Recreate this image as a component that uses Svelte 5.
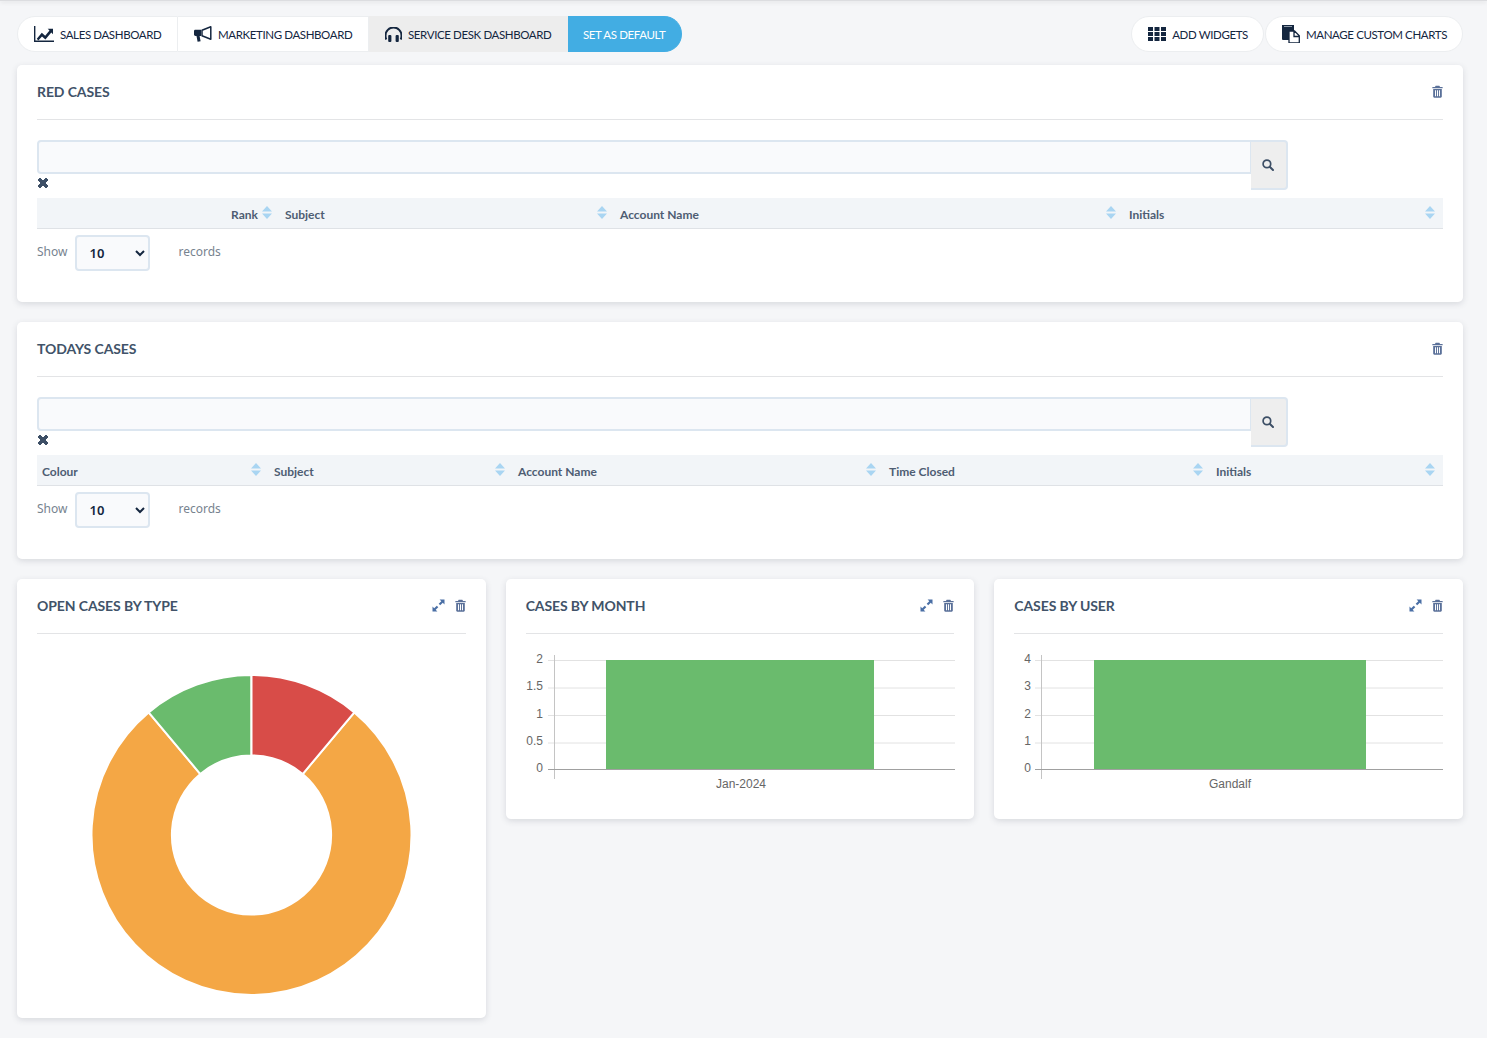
<script>
  const tables = [
    { title: 'RED CASES', cols: [
      { label: 'Rank', width: 243, right: true },
      { label: 'Subject', width: 335 },
      { label: 'Account Name', width: 509 },
      { label: 'Initials', width: 319 }
    ]},
    { title: 'TODAYS CASES', cols: [
      { label: 'Colour', width: 232 },
      { label: 'Subject', width: 244 },
      { label: 'Account Name', width: 371 },
      { label: 'Time Closed', width: 327 },
      { label: 'Initials', width: 232 }
    ]}
  ];
  const gridY = [15, 42.5, 70, 97.5];
  const charts = [
    { title: 'CASES BY MONTH', ticks: ['2', '1.5', '1', '0.5', '0'], label: 'Jan-2024', axis: 28, barX: 80, barW: 268, labelX: 215, tickX: 17 },
    { title: 'CASES BY USER', ticks: ['4', '3', '2', '1', '0'], label: 'Gandalf', axis: 27, barX: 80, barW: 272, labelX: 216, tickX: 17 }
  ];
  const tickY = [14, 41, 69, 96, 123];
</script>

{#snippet trash()}
  <svg class="trash" viewBox="0 0 12 14" width="11" height="13">
    <path fill-rule="evenodd" d="M4 0.6h4l.8 1.5H11.6v1.3H.4V2.1h2.800zM1.300 4.200h9.400v8.300c0 .8-.5 1.300-1.200 1.300H2.500c-.7 0-1.200-.5-1.200-1.300zM3.300 5.600v6.600h1.100V5.600zM5.450 5.600v6.600h1.100V5.600zM7.600 5.600v6.600h1.100V5.600z"/>
  </svg>
{/snippet}

{#snippet expand()}
  <svg class="expand" viewBox="0 0 13 13" width="13" height="13">
    <path d="M7.600 0.500H12.500V5.400L10.800 3.700 8.200 6.300 6.700 4.800 9.300 2.200zM.5 7.600 2.200 9.300 4.800 6.700 6.300 8.200 3.700 10.800 5.400 12.500H.5z"/>
  </svg>
{/snippet}

{#snippet sort()}
  <svg class="sort" viewBox="0 0 10 13" width="10" height="13">
    <path fill="#a9d5f2" d="M5 0 10 5.400H0zM0 7.400H10L5 13z"/>
  </svg>
{/snippet}

<div class="topline"></div>
<main class="page">
  <div class="toolbar">
    <nav class="tabs">
      <button class="tab first">
        <svg viewBox="0 0 20 16" width="20" height="16"><path d="M.7 0v15.200H20" fill="none" stroke="#14263f" stroke-width="1.400"/><path d="M2.800 12.800 7.800 6.800l3.400 3 4.300-5.300-1.800-1.700H19v5.400l-1.700-1.700-5.900 7-3.400-3.100-3.700 4.200z" fill="#14263f"/></svg>
        Sales Dashboard
      </button>
      <button class="tab">
        <svg viewBox="0 0 18 16" width="18" height="16"><path d="M0 5.200C0 4.300.7 3.800 1.500 3.800H7V10H5.600l1 5.200-3 .6L2.500 10H1.500C.7 10 0 9.500 0 8.600z" fill="#14263f"/><path d="M8 4.200 16.800.8v12.400L8 9.800z" fill="#fff" stroke="#14263f" stroke-width="1.500" stroke-linejoin="round"/></svg>
        Marketing Dashboard
      </button>
      <button class="tab active">
        <svg viewBox="0 0 17 15" width="17" height="15"><path d="M1.300 12.500A8 8 0 0 1 .5 8.500 8 8 0 0 1 16.500 8.500 8 8 0 0 1 15.700 12.500" fill="none" stroke="#14263f" stroke-width="2"/><rect x="3.200" y="8" width="3.200" height="7" rx="1" fill="#14263f"/><rect x="10.600" y="8" width="3.200" height="7" rx="1" fill="#14263f"/></svg>
        Service Desk Dashboard
      </button>
      <button class="tab default">Set as default</button>
    </nav>
    <div class="actions">
      <button class="pill">
        <svg viewBox="0 0 18 14" width="18" height="14"><path d="M0 0h5v4H0zM6.500 0h5v4h-5zM13 0h5v4h-5zM0 5h5v4H0zM6.500 5h5v4h-5zM13 5h5v4h-5zM0 10h5v4H0zM6.500 10h5v4h-5zM13 10h5v4h-5z" fill="#14263f"/></svg>
        Add widgets
      </button>
      <button class="pill">
        <svg viewBox="0 0 18 18" width="18" height="18"><path d="M0 0h12v15H1a1 1 0 0 1-1-1z" fill="#14263f"/><path d="M2 1.500h8" stroke="#8e9aa8"/><path d="M7 6h5.500l4.800 4.800V18H7zM12 6v5.500h5" fill="#fff" stroke="#14263f" stroke-width="1.300"/></svg>
        Manage custom charts
      </button>
    </div>
  </div>

  {#each tables as t}
    <section class="card wide">
      <header class="head">
        <h2>{t.title}</h2>
        <span class="tools">{@render trash()}</span>
      </header>
      <div class="searchrow">
        <input class="search" type="text" aria-label="Search" />
        <button class="go" aria-label="Search">
          <svg viewBox="0 0 12 12" width="12" height="12"><circle cx="4.900" cy="4.900" r="3.800" fill="none" stroke="#3d4f66" stroke-width="1.700"/><path d="M7.700 7.700 11 11" stroke="#3d4f66" stroke-width="2" stroke-linecap="round"/></svg>
        </button>
      </div>
      <svg class="clear" viewBox="0 0 12 12" width="12" height="12"><path d="M1 3 3 1l3 3 3-3 2 2-3 3 3 3-2 2-3-3-3 3-2-2 3-3z" fill="#3d4f66" stroke="#3d4f66" stroke-linejoin="round"/></svg>
      <table>
        <colgroup>
          {#each t.cols as c}<col style="width:{c.width}px" />{/each}
        </colgroup>
        <thead>
          <tr>
            {#each t.cols as c}
              <th class:right={c.right}>{c.label}{@render sort()}</th>
            {/each}
          </tr>
        </thead>
      </table>
      <div class="length">
        <span>Show</span>
        <select aria-label="Records"><option>10</option><option>25</option><option>50</option></select>
        <span class="records">records</span>
      </div>
    </section>
  {/each}

  <div class="row">
    <section class="card">
      <header class="head">
        <h2>OPEN CASES BY TYPE</h2>
        <span class="tools">{@render expand()}{@render trash()}</span>
      </header>
      <svg class="donut" viewBox="0 0 429 384" width="429" height="384">
        <g transform="translate(214.500 201)" stroke="#fff" stroke-width="2">
          <path fill="#f4a745" d="M102.850 -122.570A160 160 0 1 1 -102.850 -122.570L-51.170 -60.980A79.600 79.600 0 1 0 51.170 -60.980Z"/>
          <path fill="#6abb6d" d="M-102.850 -122.570A160 160 0 0 1 0 -160V-79.600A79.600 79.600 0 0 0 -51.170 -60.980Z"/>
          <path fill="#d84c48" d="M0 -160A160 160 0 0 1 102.850 -122.570L51.170 -60.980A79.600 79.600 0 0 0 0 -79.600Z"/>
        </g>
      </svg>
    </section>

    {#each charts as c}
      <section class="card">
        <header class="head">
          <h2>{c.title}</h2>
          <span class="tools">{@render expand()}{@render trash()}</span>
        </header>
        <svg class="chart" viewBox="0 0 429 165" width="429" height="165">
          {#each gridY as y}
            <line x1={c.axis - 6} x2="429" y1={y + 11.500} y2={y + 11.500} stroke="#e2e2e2"/>
          {/each}
          <rect x={c.barX} y="26" width={c.barW} height="110" fill="#6abb6d"/>
          <line x1={c.axis + 0.5} x2={c.axis + 0.5} y1="21" y2="145" stroke="#c4c4c4"/>
          <line x1={c.axis - 6} x2="429" y1="135.500" y2="135.500" stroke="#a0a0a0"/>
          {#each c.ticks as t, i}
            <text x={c.tickX} y={tickY[i] + 15} text-anchor="end">{t}</text>
          {/each}
          <text x={c.labelX} y="154" text-anchor="middle">{c.label}</text>
        </svg>
      </section>
    {/each}
  </div>
</main>

<style>
  :global(body) {
    margin: 0;
    background: #f5f6f8;
    font-family: "Lato", "Liberation Sans", sans-serif;
    color: #3d4f66;
  }
  .topline {
    height: 1px;
    background: #dcdde0;
    box-shadow: 0 1px 4px rgba(0, 0, 0, .2);
  }
  .page {
    padding: 15px 24px 20px 17px;
  }
  .toolbar {
    display: flex;
    justify-content: space-between;
    height: 36px;
    margin-bottom: 13px;
  }
  .tabs, .actions {
    display: flex;
  }
  .tab, .pill {
    display: flex;
    align-items: center;
    gap: 6px;
    height: 36px;
    padding: 0 15px;
    border: 0;
    font: 11.500px "Lato", sans-serif;
    letter-spacing: -.38px;
    text-transform: uppercase;
    color: #14263f;
    background: #fff;
    white-space: nowrap;
    box-sizing: border-box;
  }
  .tab svg, .pill svg { flex-shrink: 0; }
  .tab {
    border-top: 1px solid #eceef0;
    border-bottom: 1px solid #eceef0;
    border-right: 1px solid #eceef0;
  }
  .tab.first {
    padding-left: 16px;
    border-left: 1px solid #eceef0;
    border-radius: 18px 0 0 18px;
    width: 161px;
  }
  .tab:nth-child(2) { width: 191px; padding-left: 16px; }
  .tab.active { width: 199px; background: #ededed; border-color: #ededed; padding-left: 16px; }
  .tab.default {
    width: 114px;
    background: #42ade3;
    border-color: #42ade3;
    color: #fff;
    border-radius: 0 18px 18px 0;
  }
  .actions { gap: 1px; }
  .pill {
    border: 1px solid #eceef0;
    border-radius: 18px;
    padding: 0 15px 0 16px;
  }
  .card {
    background: #fff;
    border-radius: 5px;
    box-shadow: 0 2px 6px rgba(60, 70, 90, .16);
    padding: 0 20px;
    box-sizing: border-box;
    min-width: 0;
  }
  .wide {
    height: 237px;
    margin-bottom: 20px;
  }
  .head {
    display: flex;
    justify-content: space-between;
    align-items: center;
    height: 52px;
    padding-bottom: 2px;
    border-bottom: 1px solid #e3e4e6;
    margin-bottom: 20px;
    box-sizing: content-box;
  }
  h2 {
    margin: 0;
    font: 700 14px "Lato", sans-serif;
    letter-spacing: -.1px;
    color: #415369;
  }
  .tools {
    display: flex;
    align-items: center;
    gap: 9px;
  }
  .trash { fill: #5a7099; }
  .expand { fill: #4a6fa5; position: relative; left: -1px; }
  .searchrow {
    display: flex;
    align-items: flex-start;
    height: 50px;
  }
  .search {
    width: 1214px;
    height: 34px;
    box-sizing: border-box;
    border: 2px solid #dce6f0;
    border-right-width: 1px;
    border-radius: 4px 0 0 4px;
    background: #f9fafc;
    padding: 0 8px;
  }
  .go {
    width: 37px;
    height: 50px;
    box-sizing: border-box;
    border: 2px solid #dce6f0;
    border-width: 2px 2px 2px 0;
    border-radius: 0 4px 4px 0;
    background: #eeeeee;
    padding: 0 1px 0 0;
    display: flex;
    align-items: center;
    justify-content: center;
  }
  .clear {
    display: block;
    margin-top: -13px;
    margin-bottom: 9px;
  }
  table {
    width: 100%;
    table-layout: fixed;
    border-collapse: collapse;
  }
  th {
    position: relative;
    box-sizing: border-box;
    height: 30px;
    padding: 4px 22px 0 5px;
    background: #f2f5f8;
    border-bottom: 1px solid #dfe2e6;
    font: 700 12px "Lato", sans-serif;
    color: #4e5d73;
    text-align: left;
  }
  th.right { text-align: right; }
  .sort {
    position: absolute;
    right: 8px;
    top: 8px;
  }
  .length {
    display: flex;
    align-items: center;
    margin-top: 6px;
    height: 36px;
    font: 12px "Noto Sans", sans-serif;
    color: #77838f;
  }
  .length span { position: relative; top: -1px; }
  select {
    width: 75px;
    height: 36px;
    margin-left: 8px;
    padding-left: 8px;
    border: 2px solid #dce6f0;
    border-radius: 4px;
    background: #f9fafc;
    font: 600 13px "Noto Sans", sans-serif;
    color: #14263f;
  }
  .records { margin-left: 28px; }
  .row {
    display: grid;
    grid-template-columns: repeat(3, minmax(0, 1fr));
    gap: 20px;
    align-items: start;
  }
  .row .head { margin-bottom: 0; }
  .donut {
    display: block;
  }
  .chart {
    display: block;
    margin-bottom: 20px;
  }
  text {
    font: 12px "Liberation Sans", sans-serif;
    fill: #666;
  }
</style>
